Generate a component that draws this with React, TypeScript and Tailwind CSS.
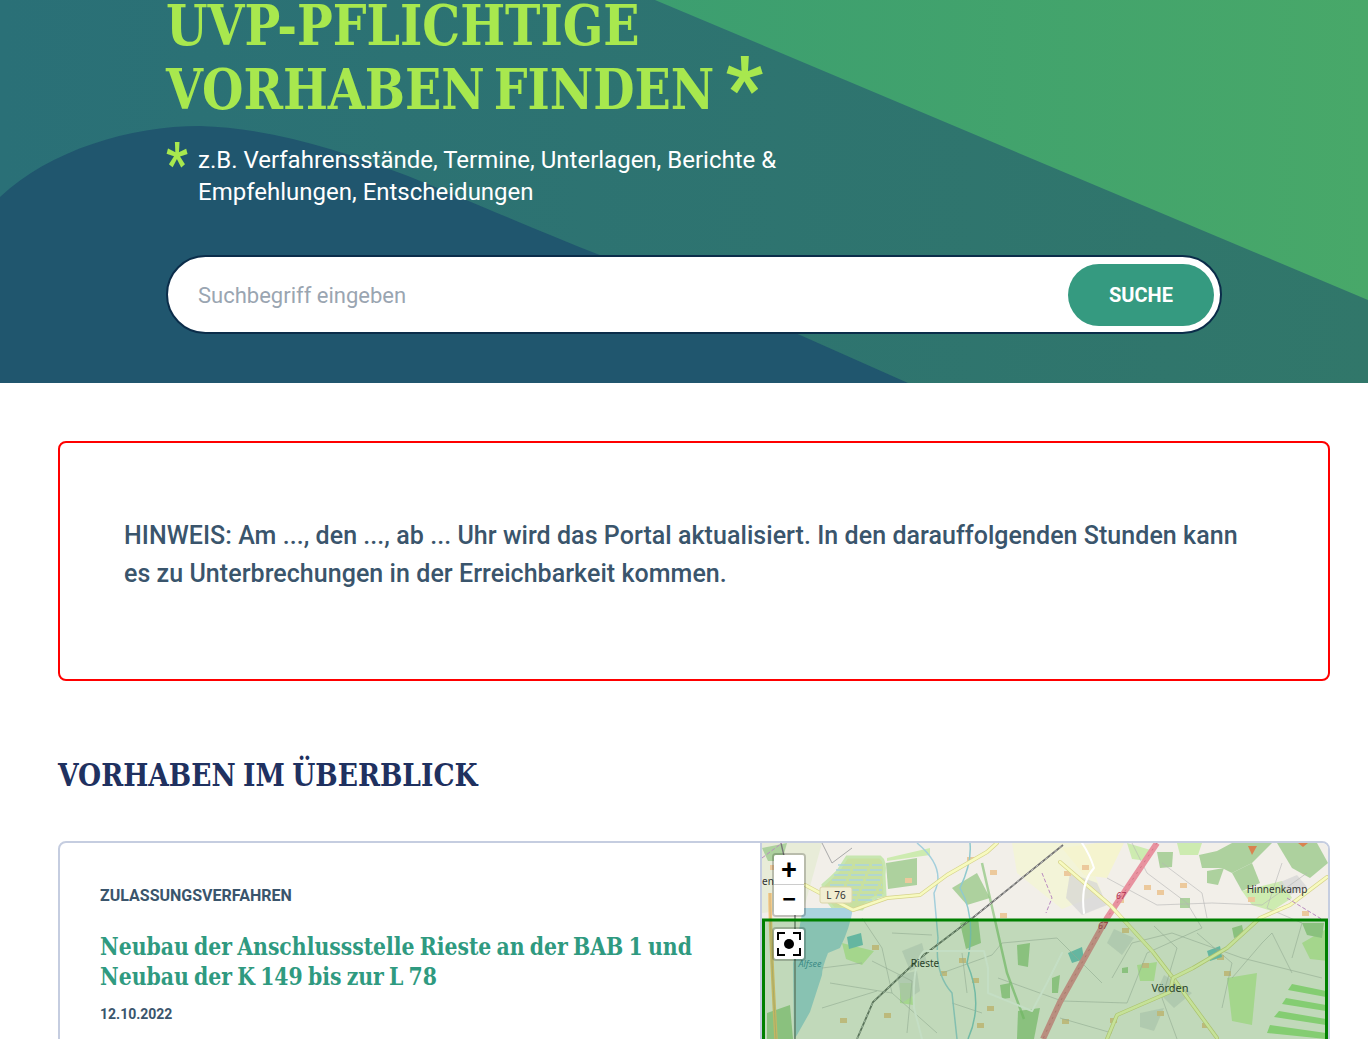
const slab = "font-['DejaVu_Serif',serif] [font-stretch:condensed] font-bold";

const patches = [
  "M124,20 L155,15 L155,42 L126,46 Z",
  "M190,45 L215,30 L228,55 L205,62 Z",
  "M198,80 L216,75 L219,100 L204,106 Z",
  "M255,102 L268,100 L266,124 L256,122 Z",
  "M238,142 L248,140 L248,155 L240,156 Z",
  "M256,168 L278,165 L272,196 L255,196 Z",
  "M5,170 L28,162 L31,196 L5,196 Z",
  "M470,85 L480,82 L482,92 L472,95 Z",
  "M540,80 L562,80 L560,95 L545,92 Z",
  "M395,9 L411,9 L410,24 L398,25 Z",
  "M437,12 L455,8 L470,0 L510,0 L490,20 L470,30 L460,25 L440,25 Z",
  "M470,30 L490,20 L498,40 L480,48 Z",
  "M515,0 L555,0 L566,20 L548,35 L530,25 Z",
  "M445,28 L462,25 L456,42 L445,40 Z",
  "M418,55 L428,55 L428,65 L418,65 Z",
  "M0,5 L25,0 L20,18 L6,18 Z",
  "M360,125 L366,124 L366,130 L360,130 Z",
  "M290,135 L298,132 L296,150 L290,150 Z",
];

const lightGreen = [
  "M480,48 L520,38 L530,55 L510,68 L490,62 Z",
  "M365,0 L392,8 L386,18 L370,16 Z",
  "M415,0 L440,0 L436,12 L418,12 Z",
  "M80,100 L112,108 L100,122 L84,116 Z",
  "M375,122 L395,119 L392,138 L378,138 Z",
  "M465,135 L495,130 L490,182 L470,178 Z",
  "M540,100 L566,85 L566,118 L548,116 Z",
  "M138,140 L150,140 L151,162 L138,160 Z",
  "M125,15 L168,5 L168,12 L125,18 Z",
];

const farmland = [
  "M530,141 L564,148 L564,154 L526,147 Z",
  "M524,155 L564,162 L564,168 L520,161 Z",
  "M517,168 L564,176 L564,182 L512,174 Z",
  "M508,182 L564,190 L564,196 L505,190 Z",
];

const sandSpots = [
  [8, 22], [143, 35], [205, 14], [228, 27], [238, 70], [110, 102], [178, 128], [197, 115],
  [210, 135], [78, 175], [122, 170], [215, 180], [225, 163], [355, 55], [395, 47], [418, 40],
  [455, 112], [462, 128], [380, 120], [395, 168], [348, 175], [360, 85], [440, 180], [382, 42],
  [302, 28], [320, 22], [486, 54], [540, 68], [300, 176],
];

const greyBlocks = [
  "M308,30 L335,40 L345,62 L320,72 L304,55 Z",
  "M140,108 L160,100 L165,120 L148,128 Z",
  "M135,132 L155,128 L158,148 L140,160 Z",
  "M402,132 L430,150 L412,165 L395,148 Z",
  "M378,170 L402,165 L392,188 L378,184 Z",
  "M352,86 L372,95 L360,112 L345,100 Z",
  "M516,40 L535,32 L545,44 L528,52 Z",
];

const MapDrawing = () => (
  <svg viewBox="0 0 566 196" className="absolute top-0 left-0 h-[196px] w-[566px]">
    <rect width="566" height="196" fill="#f2efe9" />
    <path d="M0,0 L60,0 L42,65 L0,70 Z" fill="#e8ecd8" />
    <path d="M250,0 L320,0 L340,50 L300,66 L255,30 Z" fill="#f3f4d8" />
    <path d="M300,5 L335,0 L362,0 L345,35 L322,32 Z" fill="#f5f4cf" />
    {lightGreen.map((d) => (
      <path key={d} d={d} fill="#cdebb0" />
    ))}
    {patches.map((d) => (
      <path key={d} d={d} fill="#add19e" />
    ))}
    {greyBlocks.map((d) => (
      <path key={d} d={d} fill="#d4d4d4" opacity="0.7" />
    ))}
    {farmland.map((d) => (
      <path key={d} d={d} fill="#a5e08f" />
    ))}
    {sandSpots.map(([x, y]) => (
      <rect key={`${x}-${y}`} x={x} y={y} width="7" height="5" fill="#ecc99c" />
    ))}
    <path d="M85,14 L118,14 Q124,18 122,32 L123,52 Q106,55 100,66 L72,66 Q62,55 61,42 Q68,36 76,28 Z" fill="#c8e0a0" stroke="#c7e6b0" strokeWidth="3" />
    {[22, 27, 32, 37, 42, 47, 52, 57].map((y, i) => (
      <path key={y} d={`M${76 - i * 2},${y} L${120},${y}`} stroke="#aad3df" strokeWidth="1.5" strokeDasharray="14 3" />
    ))}
    <path d="M41,65 L91,65 Q88,85 78,105 L66,110 Q60,125 60,132 L48,169 L35,192 L32,196 L31,120 Z" fill="#aad3df" />
    <path d="M85,94 L99,90 L101,102 L87,106 Z" fill="#7fc4c8" />
    <path d="M445,108 L458,103 L460,114 L448,118 Z" fill="#7fc4c8" />
    <path d="M306,110 L320,104 L322,116 L310,120 Z" fill="#7fc4c8" />
    <g fill="none" stroke="#b5b5b5" strokeWidth="0.6">
      <path d="M110,118 L150,138 L145,190" />
      <path d="M68,140 L130,150 L175,190" />
      <path d="M100,75 L120,105 L130,150" />
      <path d="M180,130 L230,112 L240,100 L295,95 L340,140" />
      <path d="M236,135 L300,158 L365,160 L385,110 L440,85" />
      <path d="M392,83 L415,105 L400,155 L415,196" />
      <path d="M350,135 L370,100 L410,90 L480,115 L560,135" />
      <path d="M435,90 L470,120 L460,165" />
      <path d="M470,135 L500,100 L510,90 L530,130" />
      <path d="M520,20 L505,65 L540,80 L530,115" />
      <path d="M370,0 L385,30 L425,60 L440,85" />
      <path d="M345,35 L395,62 L450,60 L500,62 L545,30" />
      <path d="M298,175 L350,190" />
      <path d="M100,120 L60,125 M115,148 L60,165 M130,90 L170,92 M200,110 L205,150 M190,160 L220,170" />
      <path d="M400,20 L440,50 L445,75" />
    </g>
    <path d="M60,0 L70,20 L90,5" fill="none" stroke="#a9a9a9" strokeWidth="1" />
    <path d="M8,50 Q8,90 14,196" fill="none" stroke="#f5c57c" strokeWidth="3.5" />
    <path d="M8,50 Q8,90 14,196" fill="none" stroke="#c8b486" strokeWidth="0.8" />
    <path d="M155,0 Q185,25 172,50 L176,95 Q172,130 190,150 L195,196" fill="none" stroke="#a4cfdc" strokeWidth="1.5" />
    <path d="M208,0 Q210,20 198,45 Q215,75 205,120 Q222,160 206,196" fill="none" stroke="#8fc9cf" strokeWidth="1.5" />
    <path d="M220,20 L245,130 L262,176" fill="none" stroke="#8cc47c" strokeWidth="2.5" opacity="0.7" />
    <path d="M395,0 L345,75 L298,159 L281,196" fill="none" stroke="#e8929f" strokeWidth="6" />
    <path d="M395,0 L345,75 L298,159 L281,196" fill="none" stroke="#c96a7c" strokeWidth="0.7" strokeDasharray="2 5" />
    <path d="M95,196 L111,159 L158,115 L208,77 L301,2" fill="none" stroke="#707070" strokeWidth="1.8" />
    <path d="M95,196 L111,159 L158,115 L208,77 L301,2" fill="none" stroke="#fff" strokeWidth="0.6" strokeDasharray="3 3" />
    <path d="M19,0 L33,60 L33,196" fill="none" stroke="#777" strokeWidth="1.4" />
    <g fill="none" strokeLinecap="round" strokeLinejoin="round">
      <path d="M43,42 L58,50 L91,67 L125,55 L158,52 L185,32 L225,9 L235,0" stroke="#d6d38b" strokeWidth="4" />
      <path d="M43,42 L58,50 L91,67 L125,55 L158,52 L185,32 L225,9 L235,0" stroke="#f7fabf" strokeWidth="2.6" />
      <path d="M298,19 L348,62 L391,109 L411,135 L455,195" stroke="#d6d38b" strokeWidth="4" />
      <path d="M298,19 L348,62 L391,109 L411,135 L455,195" stroke="#f7fabf" strokeWidth="2.6" />
      <path d="M345,196 L355,172 L378,162 L408,149 L411,135 L431,125 L465,105 L498,75 L528,62 L565,34" stroke="#d6d38b" strokeWidth="4" />
      <path d="M345,196 L355,172 L378,162 L408,149 L411,135 L431,125 L465,105 L498,75 L528,62 L565,34" stroke="#f7fabf" strokeWidth="2.6" />
      <path d="M160,196 L152,165 Q150,120 162,108 L222,108 L226,125 L226,150 L270,168 L285,140 L300,110" stroke="#f5f5f5" strokeWidth="2" />
      <path d="M320,0 Q328,12 332,25 Q318,40 322,70" stroke="#fff" strokeWidth="2" />
    </g>
    <path d="M0,15 L20,0 M280,30 L290,55 L284,70 M525,55 L566,80" fill="none" stroke="#b98ac0" strokeWidth="1" strokeDasharray="4 2" />
    <path d="M486,3 L495,3 L490,12 Z" fill="#d9834f" />
    <path d="M536,0 L546,0 L541,4 Z" fill="#d9834f" />
    <rect x="58" y="44" width="32" height="16" rx="2" fill="#f1eed2" stroke="#d9d5a8" />
    <g fontFamily="'Noto Sans', sans-serif" textAnchor="middle">
      <text x="74" y="56" fontSize="10" fill="#333">L 76</text>
      <text x="6" y="42" fontSize="10" fill="#333">en</text>
      <text x="163" y="124" fontSize="10" fill="#333">Rieste</text>
      <text x="48" y="124" fontSize="9" fontStyle="italic" fill="#4e8ea8">Alfsee</text>
      <text x="515" y="50" fontSize="10" fill="#333">Hinnenkamp</text>
      <text x="408" y="149" fontSize="11" fill="#333">Vörden</text>
      <text x="359" y="56" fontSize="9" fontStyle="italic" fill="#b03050">67</text>
      <text x="341" y="86" fontSize="9" fontStyle="italic" fill="#b03050">67</text>
    </g>
    <rect x="1.5" y="77" width="563" height="125" fill="#008000" fillOpacity="0.2" stroke="#008000" strokeWidth="3" />
  </svg>
);

export default function App() {
  return (
    <div className="h-[1039px] overflow-hidden bg-white font-['Roboto',sans-serif]">
      <section className="relative h-[383px] overflow-hidden bg-[#2c7270]">
        <svg viewBox="0 0 1368 383" className="absolute inset-0 h-full w-full">
          <defs>
            <linearGradient id="heroBase" x1="0" x2="1" y1="0" y2="0">
              <stop offset="0" stopColor="#2a7077" />
              <stop offset="1" stopColor="#31776a" />
            </linearGradient>
            <linearGradient id="heroGreen" x1="0" x2="1" y1="0" y2="0">
              <stop offset="0" stopColor="#3c9e70" />
              <stop offset="1" stopColor="#48a869" />
            </linearGradient>
          </defs>
          <rect width="1368" height="383" fill="url(#heroBase)" />
          <path d="M655,0 L1368,300 L1368,0 Z" fill="url(#heroGreen)" />
          <path d="M0,197 C50,150 130,126 200,126 C270,128 340,150 408,176 C480,205 540,232 610,259 L800,335 L908,383 L0,383 Z" fill="#20566e" />
        </svg>

        <div className="relative ml-[166px] w-[1056px] -mt-[7px]">
          <h1 className={`${slab} w-fit origin-left scale-x-[0.944] text-[56px] leading-[64px] [word-spacing:-8px] uppercase text-[#a8e84e]`}>
            UVP-pflichtige
            <br />
            <span className="relative">
              Vorhaben finden
              <span className="absolute top-[-16px] left-full ml-[12px] font-['Roboto',sans-serif] text-[88px] leading-[96px]">*</span>
            </span>
          </h1>

          <div className="mt-[23px] flex">
            <span className="-mt-[10px] w-[32px] shrink-0 origin-top scale-y-125 text-[48px] leading-[48px] font-bold text-[#a8e84e]">*</span>
            <p className="w-[600px] text-2xl leading-[32px] text-white">
              z.B. Verfahrensstände, Termine, Unterlagen, Berichte &amp; Empfehlungen, Entscheidungen
            </p>
          </div>

          <div className="mt-[47px] flex h-[79px] items-center rounded-full border-2 border-[#0b2d4a] bg-white pr-[6px] pl-[30px]">
            <span className="flex-1 pt-[2px] text-[22px] text-[#9aa5b1]">Suchbegriff eingeben</span>
            <button className="h-[62px] w-[146px] rounded-full bg-[#359a80] text-xl font-bold text-white">SUCHE</button>
          </div>
        </div>
      </section>

      <main className="mr-[38px] ml-[58px] pt-[58px]">
        <div className="flex h-[240px] items-center rounded-lg border-2 border-[#ff0000] px-[64px] pb-[12px]">
          <p className="text-[25px] leading-[38px] tracking-[0.05px] font-medium text-[#3a556c]">
            HINWEIS: Am ..., den ..., ab ... Uhr wird das Portal aktualisiert. In den darauffolgenden Stunden kann es zu Unterbrechungen in der Erreichbarkeit kommen.
          </p>
        </div>

        <h2 className={`${slab} mt-[72px] origin-left scale-x-[0.921] text-[32px] leading-[44px] [word-spacing:-2px] uppercase text-[#1f3160]`}>Vorhaben im Überblick</h2>

        <article className="mt-[44px] flex h-[320px] overflow-hidden rounded-lg border-2 border-[#c5cde0]">
          <div className="w-[700px] shrink-0 pt-[43px] pr-[40px] pl-[40px]">
            <div className="text-base leading-[20px] font-bold text-[#3a556c]">ZULASSUNGSVERFAHREN</div>
            <h3 className={`${slab} mt-[26px] origin-left scale-x-[0.945] text-2xl leading-[30px] whitespace-nowrap [word-spacing:-2px] text-[#2f9a80]`}>
              Neubau der Anschlussstelle Rieste an der BAB 1 und
              <br />
              Neubau der K 149 bis zur L 78
            </h3>
            <div className="mt-[12px] text-sm leading-[20px] font-bold text-[#3a556c]">12.10.2022</div>
          </div>
          <div className="relative flex-1 border-l-2 border-[#c5cde0]">
            <MapDrawing />
            <div className="absolute top-[10px] left-[10px] w-[34px] rounded-[4px] border-2 border-black/20 bg-clip-padding">
              <button className="flex h-[30px] w-full items-center justify-center rounded-t-[2px] border-b border-[#ccc] bg-white text-[28px] font-medium leading-none text-black">+</button>
              <button className="flex h-[30px] w-full items-center justify-center rounded-b-[2px] bg-white text-[28px] font-medium leading-none text-black">−</button>
            </div>
            <div className="absolute top-[84px] left-[10px] flex h-[34px] w-[34px] items-center justify-center rounded-[4px] border-2 border-black/20 bg-white bg-clip-padding">
              <svg viewBox="0 0 26 26" className="h-[26px] w-[26px]" fill="none" stroke="#000" strokeWidth="2">
                <path d="M9,2 L2,2 L2,9 M17,2 L24,2 L24,9 M2,17 L2,24 L9,24 M24,17 L24,24 L17,24" />
                <circle cx="13" cy="13" r="5" fill="#000" stroke="none" />
              </svg>
            </div>
          </div>
        </article>
      </main>
    </div>
  );
}
